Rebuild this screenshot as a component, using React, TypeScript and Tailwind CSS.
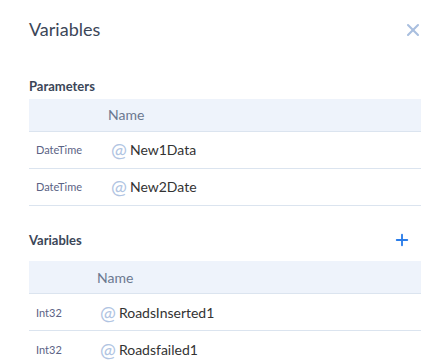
import { X, Plus } from "lucide-react"

type Item = { type: string; name: string }

const params: Item[] = [
    { type: "DateTime", name: "New1Data" },
    { type: "DateTime", name: "New2Date" },
]

const vars: Item[] = [
    { type: "Int32", name: "RoadsInserted1" },
    { type: "Int32", name: "Roadsfailed1" },
]

function VarTable({ items, firstCol }: { items: Item[]; firstCol: string }) {
    return (
        <div className="flex flex-col">
            <div className="flex h-[33px] items-center bg-[#eef3fb] border-b border-[#dbe4ef]">
                <div className={firstCol} />
                <span className="text-[14px] text-[#6b7890]">Name</span>
            </div>
            {items.map((it) => (
                <div key={it.name} className="flex h-[37px] shrink-0 items-center border-b border-[#dbe4ef]">
                    <div className={firstCol + " pl-[7px] pt-[2px] text-[11px] text-[#5b6385]"}>{it.type}</div>
                    <span className="ml-[3px] text-[19px] leading-none text-[#b0c4e2]">@</span>
                    <span className="ml-[3px] text-[14px] text-[#333]">{it.name}</span>
                </div>
            ))}
        </div>
    )
}

export default function App() {
    return (
        <div className="flex flex-col w-[440px] h-[360px] overflow-hidden bg-white pl-[29px] pr-[19px] font-['Lato',sans-serif]">
            <div className="flex items-center justify-between pt-[16px] h-[44px]">
                <h1 className="text-[18px] text-[#3b4658]">Variables</h1>
                <X className="mr-[-2px] w-[20px] h-[20px] text-[#a9bfdf]" strokeWidth={2.5} />
            </div>

            <div className="pt-[34px] pb-[2px]">
                <p className="text-[13px] font-bold text-[#3b4658]">Parameters</p>
            </div>
            <VarTable items={params} firstCol="w-[79px] shrink-0" />

            <div className="flex items-center justify-between pt-[25px] pb-[11px]">
                <p className="text-[13px] font-bold text-[#3b4658]">Variables</p>
                <Plus className="mr-[10px] w-[18px] h-[18px] text-[#2b7de9]" strokeWidth={2.5} />
            </div>
            <VarTable items={vars} firstCol="w-[68px] shrink-0" />
        </div>
    )
}
